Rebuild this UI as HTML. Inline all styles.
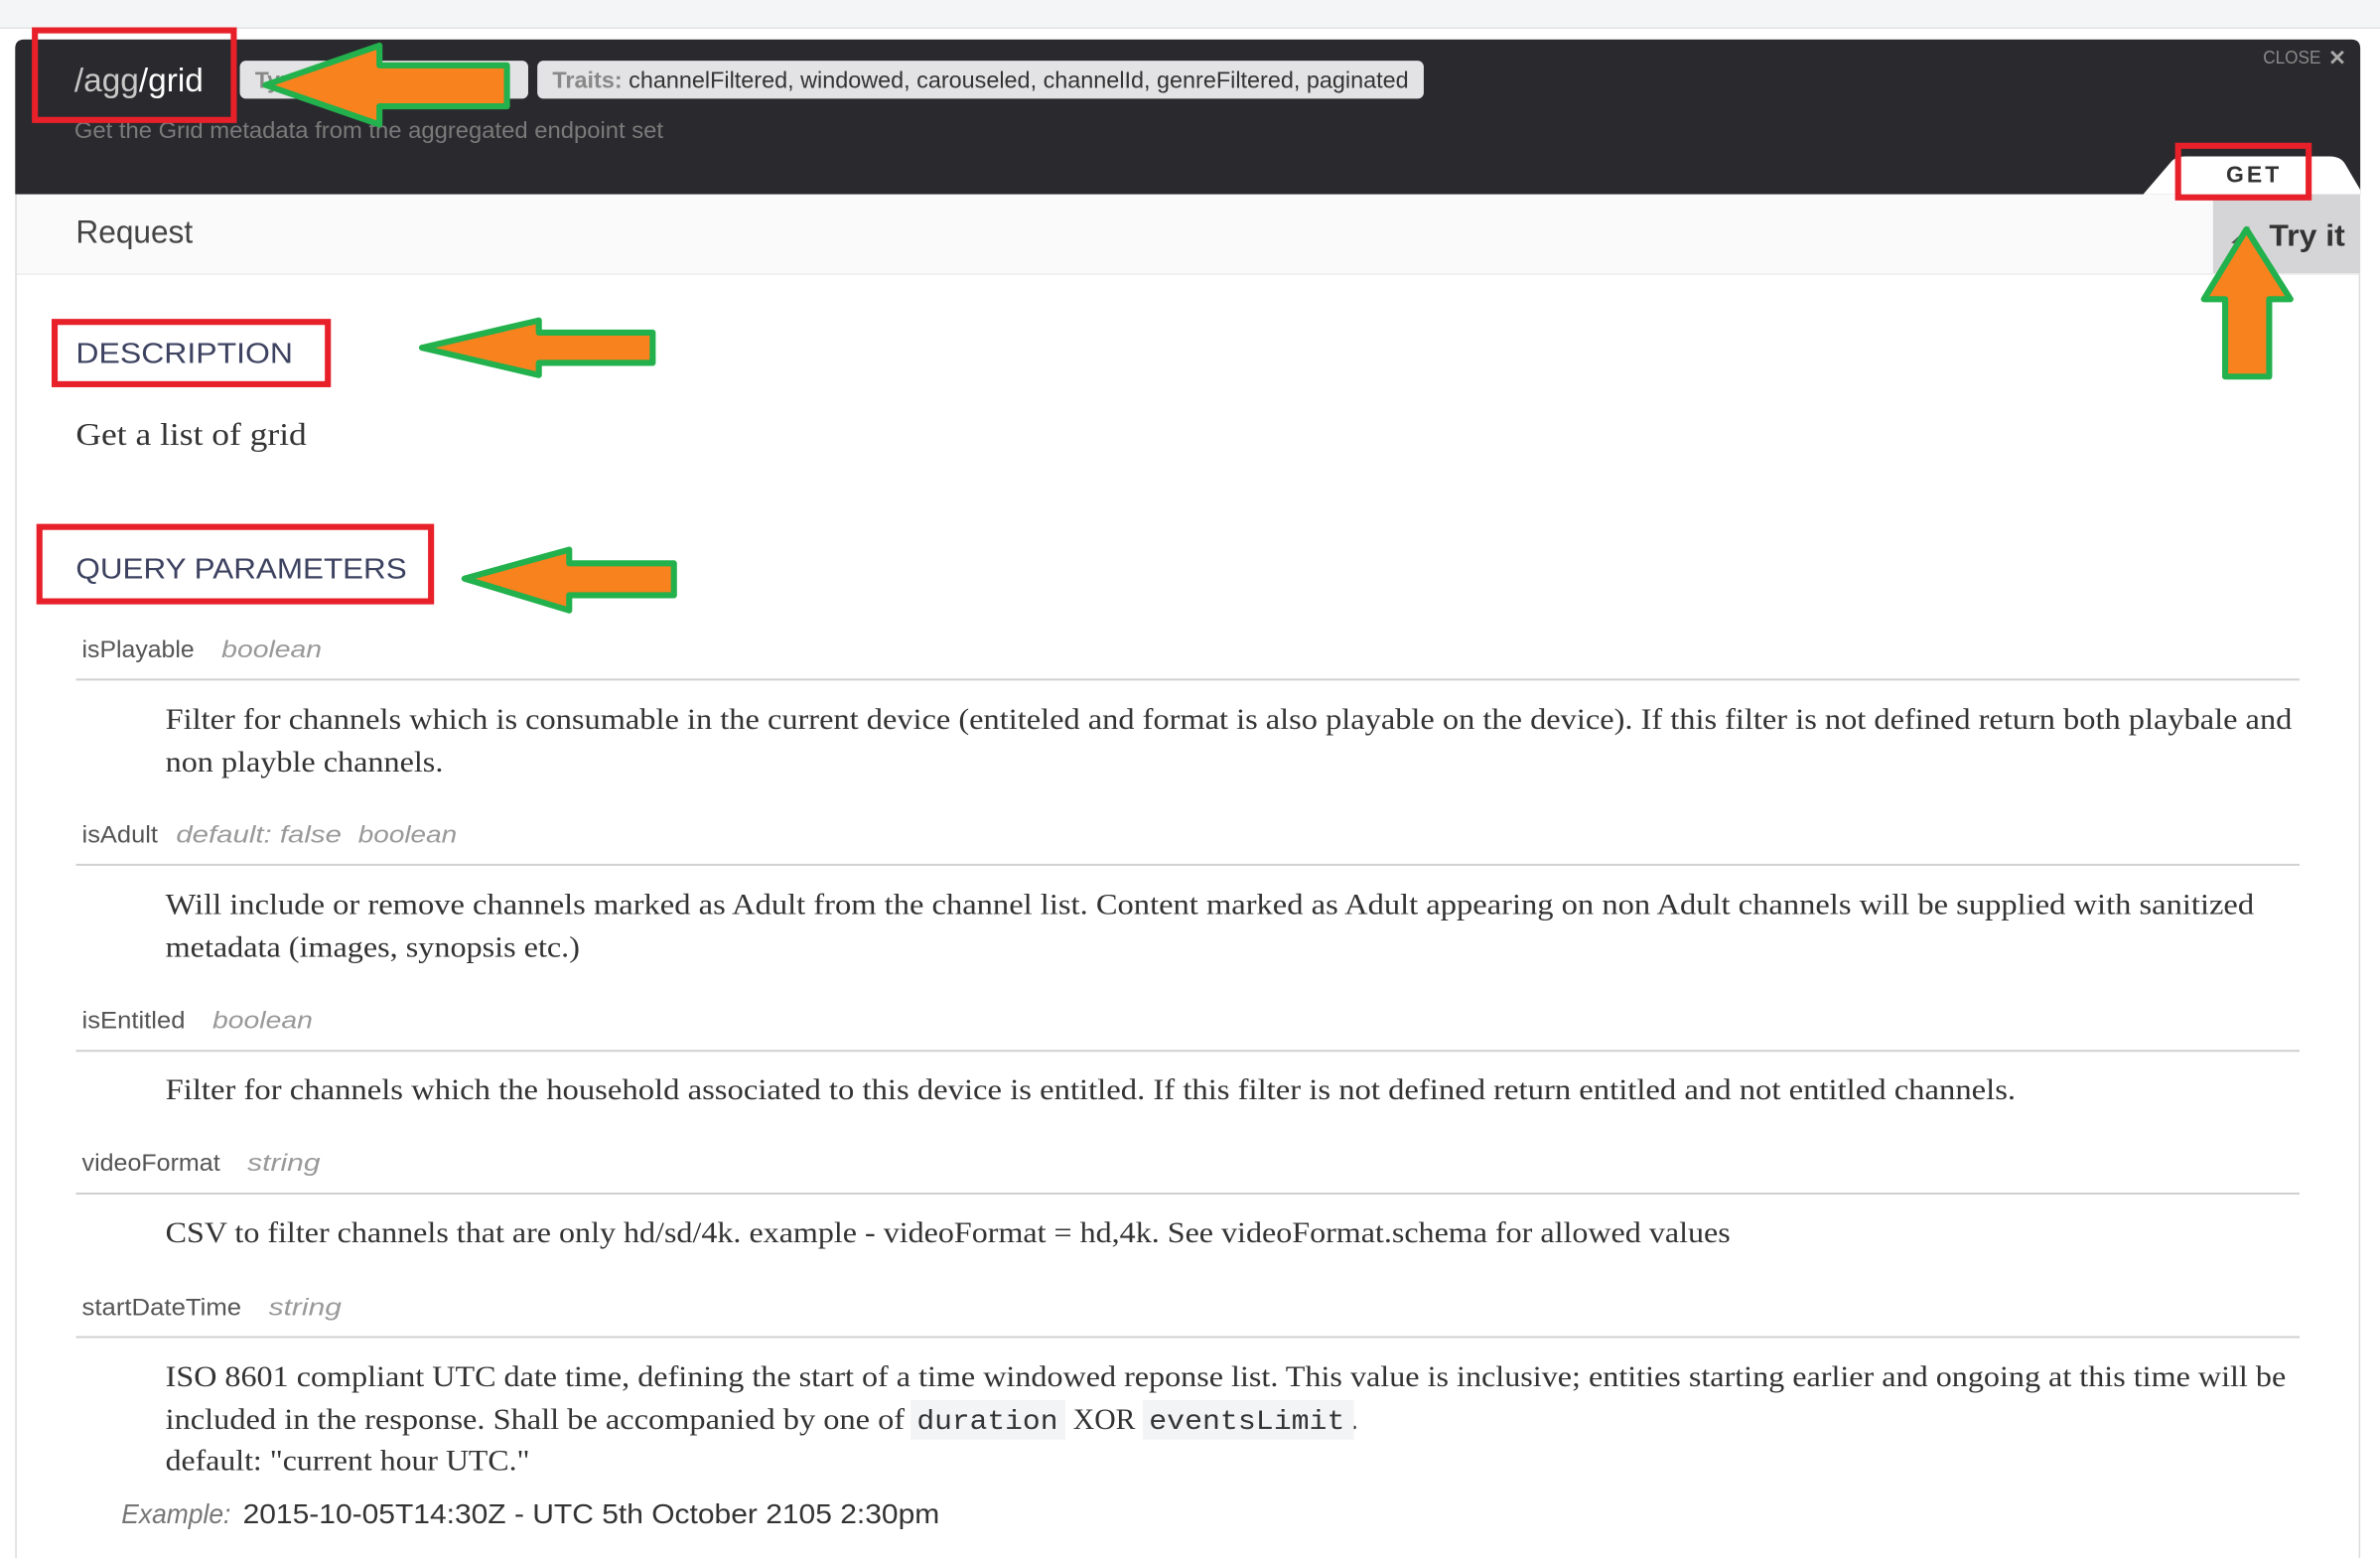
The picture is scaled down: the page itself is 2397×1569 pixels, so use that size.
<!DOCTYPE html>
<html><head><meta charset="utf-8"><style>
html,body{margin:0;padding:0;background:#fff;overflow:hidden}
svg{display:block}
.s{font-family:"Liberation Sans",sans-serif}
.r{font-family:"Liberation Serif",serif}
.m{font-family:"Liberation Mono",monospace}
</style></head><body>
<svg width="2397" height="1569" viewBox="0 0 1568 1026" preserveAspectRatio="none" xmlns="http://www.w3.org/2000/svg">
<rect x="0" y="0" width="1568" height="1026" fill="#fff"/>
<rect x="0" y="0" width="1568" height="18" fill="#f4f5f7"/>
<line x1="0" y1="18.5" x2="1568" y2="18.5" stroke="#e2e2e4"/>
<path d="M10,128 V32 Q10,26 16,26 H1549 Q1555,26 1555,32 V128 Z" fill="#2a2a2e"/>
<text class="s" x="49" y="60" font-size="22" textLength="85" lengthAdjust="spacingAndGlyphs"><tspan fill="#c8c8c8">/agg</tspan><tspan fill="#fff">/grid</tspan></text>
<rect x="158" y="40" width="190" height="25" rx="4" fill="#e3e3e5"/>
<text class="s" x="168" y="58" font-size="15" fill="#888" font-weight="bold">Type:</text>
<text class="s" x="315" y="58" font-size="15" fill="#333">on</text>
<rect x="354" y="40" width="584" height="25" rx="4" fill="#e3e3e5"/>
<text class="s" x="364" y="58" font-size="15" textLength="564" lengthAdjust="spacingAndGlyphs"><tspan fill="#888" font-weight="bold">Traits:</tspan><tspan fill="#333"> channelFiltered, windowed, carouseled, channelId, genreFiltered, paginated</tspan></text>
<text class="s" x="49" y="91" font-size="15" fill="#7a7a7a" textLength="388" lengthAdjust="spacingAndGlyphs">Get the Grid metadata from the aggregated endpoint set</text>
<text class="s" x="1491" y="42" font-size="12" fill="#8a8a8a" textLength="38" lengthAdjust="spacingAndGlyphs">CLOSE</text>
<text class="s" x="1534" y="43" font-size="14" fill="#aaa" font-weight="bold">✕</text>
<path d="M1412,128 L1430,107 Q1433,103 1440,103 H1535 Q1542,103 1545,108 L1555,125 V128 Z" fill="#fff"/>
<text class="s" x="1485" y="120" font-size="15" fill="#333" font-weight="bold" text-anchor="middle" letter-spacing="2">GET</text>
<rect x="10" y="128" width="1545" height="52" fill="#fafafa"/>
<line x1="10" y1="180.5" x2="1555" y2="180.5" stroke="#ececec"/>
<line x1="10.5" y1="128" x2="10.5" y2="1026" stroke="#ddd"/>
<line x1="1554.5" y1="180" x2="1554.5" y2="1026" stroke="#ddd"/>
<text class="s" x="50" y="160" font-size="21" fill="#444" textLength="77" lengthAdjust="spacingAndGlyphs">Request</text>
<rect x="1458" y="128" width="97" height="52" fill="#d5d5d7"/>
<text class="s" x="1495" y="162" font-size="20" fill="#333" font-weight="bold" textLength="50" lengthAdjust="spacingAndGlyphs">Try it</text>
<path d="M1470,160 L1482,149 L1480,162 Z" fill="#555"/>

<text class="s" x="50" y="239" font-size="19" fill="#3d4260" textLength="143" lengthAdjust="spacingAndGlyphs">DESCRIPTION</text>
<text class="r" x="50" y="293" font-size="21" fill="#333" textLength="152" lengthAdjust="spacingAndGlyphs">Get a list of grid</text>
<text class="s" x="50" y="381" font-size="19" fill="#3d4260" textLength="218" lengthAdjust="spacingAndGlyphs">QUERY PARAMETERS</text>

<g class="s" font-size="16">
<text x="54" y="433" fill="#555" textLength="74" lengthAdjust="spacingAndGlyphs">isPlayable</text>
<text x="146" y="433" fill="#999" font-style="italic" textLength="66" lengthAdjust="spacingAndGlyphs">boolean</text>
<text x="54" y="555" fill="#555" textLength="50" lengthAdjust="spacingAndGlyphs">isAdult</text>
<text x="116" y="555" fill="#999" font-style="italic" textLength="109" lengthAdjust="spacingAndGlyphs">default: false</text>
<text x="236" y="555" fill="#999" font-style="italic" textLength="65" lengthAdjust="spacingAndGlyphs">boolean</text>
<text x="54" y="677" fill="#555" textLength="68" lengthAdjust="spacingAndGlyphs">isEntitled</text>
<text x="140" y="677" fill="#999" font-style="italic" textLength="66" lengthAdjust="spacingAndGlyphs">boolean</text>
<text x="54" y="771" fill="#555" textLength="91" lengthAdjust="spacingAndGlyphs">videoFormat</text>
<text x="163" y="771" fill="#999" font-style="italic" textLength="48" lengthAdjust="spacingAndGlyphs">string</text>
<text x="54" y="866" fill="#555" textLength="105" lengthAdjust="spacingAndGlyphs">startDateTime</text>
<text x="177" y="866" fill="#999" font-style="italic" textLength="48" lengthAdjust="spacingAndGlyphs">string</text>
</g>
<g stroke="#d0d0d0" stroke-width="1.3">
<line x1="50" y1="447.5" x2="1515" y2="447.5"/>
<line x1="50" y1="569.5" x2="1515" y2="569.5"/>
<line x1="50" y1="692" x2="1515" y2="692"/>
<line x1="50" y1="786" x2="1515" y2="786"/>
<line x1="50" y1="880.5" x2="1515" y2="880.5"/>
</g>
<g class="r" font-size="19" fill="#333">
<text x="109" y="480" textLength="1401" lengthAdjust="spacingAndGlyphs">Filter for channels which is consumable in the current device (entiteled and format is also playable on the device). If this filter is not defined return both playbale and</text>
<text x="109" y="508" textLength="183" lengthAdjust="spacingAndGlyphs">non playble channels.</text>
<text x="109" y="602" textLength="1376" lengthAdjust="spacingAndGlyphs">Will include or remove channels marked as Adult from the channel list. Content marked as Adult appearing on non Adult channels will be supplied with sanitized</text>
<text x="109" y="630" textLength="273" lengthAdjust="spacingAndGlyphs">metadata (images, synopsis etc.)</text>
<text x="109" y="724" textLength="1219" lengthAdjust="spacingAndGlyphs">Filter for channels which the household associated to this device is entitled. If this filter is not defined return entitled and not entitled channels.</text>
<text x="109" y="818" textLength="1031" lengthAdjust="spacingAndGlyphs">CSV to filter channels that are only hd/sd/4k. example - videoFormat = hd,4k. See videoFormat.schema for allowed values</text>
<text x="109" y="913" textLength="1397" lengthAdjust="spacingAndGlyphs">ISO 8601 compliant UTC date time, defining the start of a time windowed reponse list. This value is inclusive; entities starting earlier and ongoing at this time will be</text>
<text x="109" y="941" textLength="487" lengthAdjust="spacingAndGlyphs">included in the response. Shall be accompanied by one of</text>
<text x="707" y="941" textLength="41" lengthAdjust="spacingAndGlyphs">XOR</text>
<text x="890" y="941">.</text>
<text x="109" y="968" textLength="240" lengthAdjust="spacingAndGlyphs">default: "current hour UTC."</text>
</g>
<rect x="600" y="922" width="102" height="26" fill="#f3f4f5"/>
<rect x="753" y="922" width="139" height="26" fill="#f3f4f5"/>
<text class="m" x="604" y="941" font-size="18" fill="#333" textLength="93" lengthAdjust="spacingAndGlyphs">duration</text>
<text class="m" x="757" y="941" font-size="18" fill="#333" textLength="129" lengthAdjust="spacingAndGlyphs">eventsLimit</text>
<text class="s" x="80" y="1003" font-size="18" fill="#777" font-style="italic" textLength="72" lengthAdjust="spacingAndGlyphs">Example:</text>
<text class="s" x="160" y="1003" font-size="18" fill="#333" textLength="459" lengthAdjust="spacingAndGlyphs">2015-10-05T14:30Z - UTC 5th October 2105 2:30pm</text>

<g fill="none" stroke="#e8202a" stroke-width="4">
<rect x="23" y="20" width="131" height="59"/>
<rect x="36" y="212" width="180" height="41"/>
<rect x="26" y="347" width="258" height="49"/>
<rect x="1435" y="96" width="86" height="34"/>
</g>
<g fill="#f7821e" stroke="#22b14c" stroke-width="4" stroke-linejoin="round">
<path d="M175,56 L250,30 L250,43 L334,43 L334,70 L250,70 L250,82 Z"/>
<path d="M278,229 L355,211 L355,219 L430,219 L430,239 L355,239 L355,247 Z"/>
<path d="M306,381 L375,362 L375,371 L444,371 L444,392 L375,392 L375,402 Z"/>
<path d="M1480,151 L1509,197 L1495,197 L1495,248 L1466,248 L1466,197 L1452,197 Z"/>
</g>
</svg>
</body></html>
